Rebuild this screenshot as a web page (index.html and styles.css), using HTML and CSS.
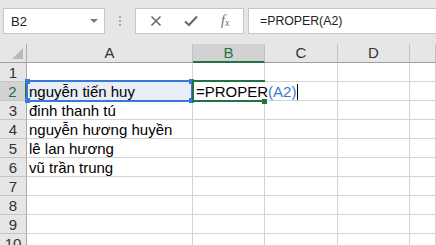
FILE: index.html
```html
<!DOCTYPE html>
<html lang="vi">
<head>
    <meta charset="UTF-8">
    <title>PROPER</title>
    <link rel="stylesheet" href="styles.css">
</head>
<body>
    <div class="bar">
        <div class="namebox">
            <span>B2</span>
            <span class="drop"></span>
        </div>
        <div class="grip"><i></i><i></i><i></i></div>
        <div class="btns">
            <svg width="12" height="12" viewBox="0 0 12 12"><path d="M1.5 1.5L10.5 10.5M10.5 1.5L1.5 10.5" stroke="#6b6b6b" stroke-width="1.6" fill="none"/></svg>
            <svg width="14" height="12" viewBox="0 0 14 12"><path d="M1 6.5L5 10L13 1.5" stroke="#6b6b6b" stroke-width="2.2" fill="none"/></svg>
            <span class="fx">f<sub>x</sub></span>
        </div>
        <div class="formula">=PROPER(A2)</div>
    </div>

    <div class="sheet">
        <div class="corner"><span class="tri"></span></div>
        <div class="colhead">A</div>
        <div class="colhead active">B</div>
        <div class="colhead">C</div>
        <div class="colhead">D</div>
        <div class="colhead"></div>

        <div class="rowhead">1</div><div class="cell"></div><div class="cell"></div><div class="cell"></div><div class="cell"></div><div class="cell"></div>
        <div class="rowhead active">2</div><div class="cell picked">nguyễn tiến huy</div><div class="cell editing">=PROPER<span class="ref">(A2)</span><span class="caret"></span></div><div class="cell"></div><div class="cell"></div><div class="cell"></div>
        <div class="rowhead">3</div><div class="cell">đinh thanh tú</div><div class="cell"></div><div class="cell"></div><div class="cell"></div><div class="cell"></div>
        <div class="rowhead">4</div><div class="cell">nguyễn hương huyền</div><div class="cell"></div><div class="cell"></div><div class="cell"></div><div class="cell"></div>
        <div class="rowhead">5</div><div class="cell">lê lan hương</div><div class="cell"></div><div class="cell"></div><div class="cell"></div><div class="cell"></div>
        <div class="rowhead">6</div><div class="cell">vũ trần trung</div><div class="cell"></div><div class="cell"></div><div class="cell"></div><div class="cell"></div>
        <div class="rowhead">7</div><div class="cell"></div><div class="cell"></div><div class="cell"></div><div class="cell"></div><div class="cell"></div>
        <div class="rowhead">8</div><div class="cell"></div><div class="cell"></div><div class="cell"></div><div class="cell"></div><div class="cell"></div>
        <div class="rowhead">9</div><div class="cell"></div><div class="cell"></div><div class="cell"></div><div class="cell"></div><div class="cell"></div>
        <div class="rowhead">10</div><div class="cell"></div><div class="cell"></div><div class="cell"></div><div class="cell"></div><div class="cell"></div>

        <div class="refbox">
            <span class="h tl"></span><span class="h tr"></span><span class="h bl"></span><span class="h br"></span>
        </div>
        <div class="editbox"><span class="h br"></span></div>
    </div>
</body>
</html>
```

FILE: styles.css
```css
* {
    box-sizing: border-box;
}
html, body {
    margin: 0;
    width: 100%;
    height: 100%;
    overflow: hidden;
    background: #fff;
    font-family: "Liberation Sans", Arial, sans-serif;
}

/* formula bar */
.bar {
    height: 44px;
    background: #e6e6e6;
    display: flex;
    align-items: flex-start;
    padding: 8px 0 0 3px;
}
.namebox {
    width: 102px;
    height: 26px;
    background: #fff;
    border: 1px solid #c6c6c6;
    display: flex;
    align-items: center;
    justify-content: space-between;
    padding: 0 6px 0 7px;
    font-size: 13px;
    color: #222;
}
.drop {
    width: 0;
    height: 0;
    border-left: 4px solid transparent;
    border-right: 4px solid transparent;
    border-top: 4px solid #7a7a7a;
}
.grip {
    width: 30px;
    height: 26px;
    display: flex;
    flex-direction: column;
    align-items: center;
    justify-content: center;
    gap: 2px;
}
.grip i {
    width: 2px;
    height: 2px;
    background: #a8a8a8;
}
.btns {
    width: 109px;
    height: 26px;
    background: #fff;
    border: 1px solid #c6c6c6;
    display: flex;
    align-items: center;
    padding-left: 14px;
    gap: 22px;
}
.fx {
    font-family: "Liberation Serif", serif;
    font-style: italic;
    font-size: 14px;
    color: #6b6b6b;
    margin-left: 1px;
}
.fx sub {
    font-size: 10px;
    vertical-align: -1px;
}
.formula {
    flex: 1;
    height: 26px;
    margin-left: 4px;
    background: #fff;
    border: 1px solid #c6c6c6;
    border-right: none;
    padding: 5px 0 0 11px;
    font-size: 12.3px;
    color: #222;
}

/* grid */
.sheet {
    position: relative;
    display: grid;
    grid-template-columns: 27px 166px 72px 73px 72px 1fr;
    grid-template-rows: 19px;
    grid-auto-rows: 19px;
    font-size: 15px;
}
.corner, .colhead, .rowhead {
    background: #e6e6e6;
    color: #333;
}
.corner {
    position: relative;
    border-right: 1px solid #ababab;
    border-bottom: 1px solid #9e9e9e;
}
.tri {
    position: absolute;
    right: 3px;
    bottom: 3px;
    width: 0;
    height: 0;
    border-left: 11px solid transparent;
    border-bottom: 11px solid #b9b9b9;
}
.colhead {
    border-right: 1px solid #c2c2c2;
    border-bottom: 1px solid #9e9e9e;
    text-align: center;
    line-height: 18px;
}
.colhead.active {
    background: #d2d2d2;
    color: #217346;
    border-bottom: 2px solid #217346;
}
.rowhead {
    border-right: 1px solid #ababab;
    border-bottom: 1px solid #c6c6c6;
    text-align: center;
    line-height: 19px;
}
.rowhead.active {
    background: #d2d2d2;
    color: #217346;
    border-right: 2px solid #217346;
}
.cell {
    border-right: 1px solid #d4d4d4;
    border-bottom: 1px solid #d4d4d4;
    padding-left: 2px;
    line-height: 19px;
    white-space: nowrap;
    color: #000;
}
.cell.picked {
    background: #e8eef8;
}
.cell.editing {
    border-right: none;
    padding-left: 3px;
    overflow: visible;
}
.ref {
    color: #3a78d6;
}
.caret {
    display: inline-block;
    width: 1px;
    height: 16px;
    background: #000;
    vertical-align: -3px;
    margin-left: 1px;
}

/* selection boxes */
.refbox, .editbox {
    position: absolute;
    top: 36px;
    height: 22px;
}
.refbox {
    left: 26px;
    width: 167px;
    border: 2px solid #3a78d6;
}
.editbox {
    left: 192px;
    width: 73px;
    border: 2px solid #217346;
    border-right: none;
}
.h {
    position: absolute;
    width: 5px;
    height: 5px;
    background: #3a78d6;
}
.tl { left: -3px; top: -3px; }
.tr { right: -3px; top: -3px; }
.bl { left: -3px; bottom: -3px; }
.br { right: -3px; bottom: -3px; }
.editbox .h {
    background: #217346;
    right: -2px;
    bottom: -4px;
}
```
